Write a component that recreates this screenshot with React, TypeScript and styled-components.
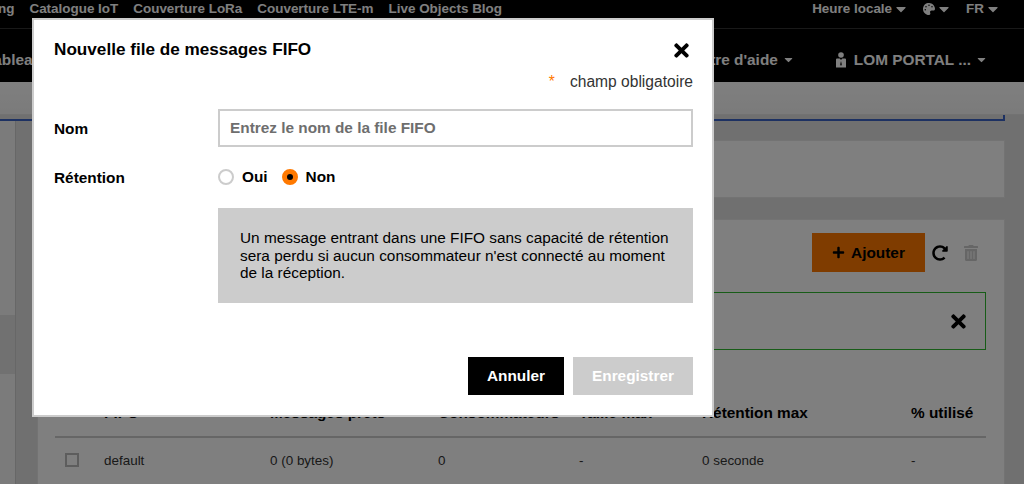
import React from 'react'
import styled, { createGlobalStyle } from 'styled-components'
import { FaCaretDown, FaPalette, FaPlus, FaRedoAlt, FaTimes, FaTrashAlt } from 'react-icons/fa'

const GlobalStyle = createGlobalStyle`
  html, body {
    margin: 0;
    height: 100%;
    overflow: hidden;
    background: #e0e0e0;
    font-family: "Liberation Sans", Arial, sans-serif;
    color: #000;
  }
`

const Page = styled.div`
  width: 1024px;
  height: 484px;
  overflow: hidden;
`

const TopBar = styled.div`
  height: 29px;
  box-sizing: border-box;
  background: #000;
  border-bottom: 1px solid #333;
  display: flex;
  justify-content: space-between;
  padding: 0 23px 0 0;
  font-size: 13.44px;
  font-weight: 700;
  line-height: 17px;
  color: #fff;
`

const TopLinks = styled.div`
  display: flex;
  gap: 15px;
  margin-left: -2px;
`

const TopTools = styled.div`
  display: flex;
  gap: 14px;
`

const Tool = styled.span`
  display: flex;
  align-items: center;
  gap: 1px;
  height: 17px;
`

const NavBar = styled.div`
  height: 53px;
  background: #000;
  display: flex;
  align-items: center;
  padding: 8px 36px 0 0;
  box-sizing: border-box;
  color: #fff;
  font-size: 15.36px;
  font-weight: 700;
  gap: 41px;
  overflow: hidden;
`

const NavItem = styled.span`
  display: flex;
  align-items: center;
  gap: 4px;
  white-space: nowrap;
`

const NavStart = styled(NavItem)`
  margin: 0 auto 0 -15px;
`

const UserGlyph = styled.svg`
  margin-right: 4px;
`

const SubBar = styled.div`
  height: 32px;
  background: linear-gradient(#ffffff, #f6f6f6);
  border-bottom: 1px solid #e4e4e4;
`

const Strip = styled.div`
  height: 4px;
  margin-right: 19px;
  border-bottom: 2px solid #3b62c4;
  border-right: 2px solid #3b62c4;
`

const Layout = styled.div`
  display: flex;
`

const Sidebar = styled.div`
  width: 15px;
  height: 380px;
  flex: none;
  background: #f6f6f6;
  border-right: 1px solid #cfcfcf;
  padding-top: 194px;
  box-sizing: content-box;
`

const SideActive = styled.div`
  height: 59px;
  background: #e2e2e2;
`

const Main = styled.div`
  flex: 1;
  padding: 19px 19px 0 21px;
  display: flex;
  flex-direction: column;
  gap: 21px;
`

const Panel = styled.div<{ $height?: number }>`
  background: #fff;
  border: 1px solid #e6e6e6;
  height: ${p => (p.$height ? `${p.$height}px` : 'auto')};
  box-sizing: border-box;
`

const ListPanel = styled(Panel)`
  padding: 13px 18px 0 17px;
  height: 300px;
`

const Actions = styled.div`
  display: flex;
  justify-content: flex-end;
  align-items: center;
  padding-right: 5px;
`

const AddButton = styled.div`
  width: 113px;
  height: 39px;
  background: #ff7900;
  display: flex;
  align-items: center;
  justify-content: center;
  gap: 6px;
  font-size: 15.36px;
  font-weight: 700;
  margin-right: 5px;
`

const IconSlot = styled.span<{ $muted?: boolean }>`
  width: 20px;
  display: flex;
  justify-content: center;
  color: ${p => (p.$muted ? '#ccc' : '#000')};

  & + & {
    margin-left: 11px;
  }
`

const SuccessBox = styled.div`
  margin-top: 20px;
  height: 58px;
  box-sizing: border-box;
  border: 1px solid #2eb82e;
  display: flex;
  align-items: center;
  justify-content: flex-end;
  padding-right: 16px;
`

const Row = styled.div<{ $head?: boolean }>`
  display: grid;
  grid-template-columns: 49px 166px 168px 141px 123px 209px 1fr;
  align-items: center;
  height: ${p => (p.$head ? '46px' : '44px')};
  padding-bottom: ${p => (p.$head ? '2px' : '0')};
  box-sizing: border-box;
  font-size: ${p => (p.$head ? '15.36px' : '13.44px')};
  font-weight: ${p => (p.$head ? 700 : 400)};
  border-bottom: ${p => (p.$head ? '2px solid #ccc' : 'none')};
  color: ${p => (p.$head ? '#000' : '#333')};
  margin-top: ${p => (p.$head ? '42px' : '0')};
`

const Check = styled.span`
  width: 14px;
  height: 14px;
  margin-left: 10px;
  box-sizing: border-box;
  border: 2px solid #bbb;
  display: block;
`

const Overlay = styled.div`
  position: fixed;
  inset: 0;
  background: rgba(0, 0, 0, 0.5);
`

const Modal = styled.div`
  position: fixed;
  left: 32px;
  top: 18px;
  width: 682px;
  height: 399px;
  box-sizing: border-box;
  background: #fff;
  border: 2px solid #ccc;
  padding: 0 19px 0 20px;
  display: flex;
  flex-direction: column;
`

const ModalHead = styled.div`
  display: flex;
  justify-content: space-between;
  align-items: center;
  height: 27px;
  margin-top: 16px;
`

const Title = styled.h2`
  margin: 0;
  font-size: 17.15px;
  line-height: 27px;
  font-weight: 700;
`

const CloseIcon = styled.span`
  display: flex;
  margin: 2px 1px 0 0;
`

const Required = styled.div`
  margin-top: 10px;
  height: 18px;
  display: flex;
  justify-content: flex-end;
  gap: 15px;
  font-size: 15.6px;
  line-height: 18px;
  color: #333;
`

const Star = styled.span`
  color: #ff7900;
`

const Field = styled.div`
  display: grid;
  grid-template-columns: 164px 1fr;
  align-items: center;
`

const Label = styled.label`
  margin-top: 2px;
  font-size: 15.36px;
  font-weight: 700;
`

const NameField = styled(Field)`
  margin-top: 18px;
`

const RetentionField = styled(Field)`
  margin-top: 18px;
  height: 24px;
`

const TextInput = styled.input`
  height: 38px;
  box-sizing: border-box;
  border: 2px solid #ccc;
  padding: 0 10px;
  font: 700 15.36px "Liberation Sans", Arial, sans-serif;
  outline: none;

  &::placeholder {
    color: #6e6e6e;
    opacity: 1;
  }
`

const Radios = styled.div`
  display: flex;
  align-items: center;
  gap: 14px;
`

const RadioOption = styled.span`
  display: flex;
  align-items: center;
  gap: 8px;
  font-size: 15.36px;
  font-weight: 700;
`

const RadioDot = styled.span<{ $on?: boolean }>`
  width: 16px;
  height: 16px;
  border-radius: 50%;
  box-sizing: border-box;
  border: ${p => (p.$on ? '5px solid #ff7900' : '2px solid #ccc')};
  background: ${p => (p.$on ? '#000' : '#fff')};
`

const Notice = styled.div`
  margin: 19px 0 0 164px;
  height: 95px;
  box-sizing: border-box;
  background: #ccc;
  padding: 21px 22px 0;
  font-size: 15.36px;
  line-height: 17.5px;
  color: #000;
`

const Footer = styled.div`
  margin-top: 54px;
  display: flex;
  justify-content: flex-end;
  gap: 9px;
`

const Button = styled.div<{ $disabled?: boolean }>`
  width: ${p => (p.$disabled ? '120px' : '96px')};
  height: 38px;
  display: flex;
  align-items: center;
  justify-content: center;
  font-size: 15.36px;
  font-weight: 700;
  color: #fff;
  background: ${p => (p.$disabled ? '#ccc' : '#000')};
`

const topLinks = ['ng', 'Catalogue IoT', 'Couverture LoRa', 'Couverture LTE-m', 'Live Objects Blog']

// the portal's own user glyph: narrow bust with a tie, not in the icon packs
const UserIcon = () => (
  <UserGlyph width="10" height="16" viewBox="0 0 10 16" fill="currentColor">
    <circle cx="5" cy="3" r="2.8" />
    <path d="M0 7.5 Q0 6.5 1 6.5 H3.8 L5 8 L6.2 6.5 H9 Q10 6.5 10 7.5 V15.5 H0 Z M5 9 L4.2 12.5 L5 14 L5.8 12.5 Z" fillRule="evenodd" />
  </UserGlyph>
)

export default function App() {
  return (
    <Page>
      <GlobalStyle />
      <TopBar>
        <TopLinks>
          {topLinks.map(link => <span key={link}>{link}</span>)}
        </TopLinks>
        <TopTools>
          <Tool>Heure locale <FaCaretDown size={16} /></Tool>
          <Tool><FaPalette size={12} /> <FaCaretDown size={16} /></Tool>
          <Tool>FR <FaCaretDown size={16} /></Tool>
        </TopTools>
      </TopBar>
      <NavBar>
        <NavStart>Tableau de bord</NavStart>
        <NavItem>Centre d'aide <FaCaretDown size={13} /></NavItem>
        <NavItem><UserIcon /> LOM PORTAL ... <FaCaretDown size={13} /></NavItem>
      </NavBar>
      <SubBar />
      <Strip />
      <Layout>
        <Sidebar><SideActive /></Sidebar>
        <Main>
          <Panel $height={58} />
          <ListPanel>
            <Actions>
              <AddButton><FaPlus size={13} /> Ajouter</AddButton>
              <IconSlot><FaRedoAlt size={16} /></IconSlot>
              <IconSlot $muted><FaTrashAlt size={16} /></IconSlot>
            </Actions>
            <SuccessBox><FaTimes size={21} /></SuccessBox>
            <Row $head>
              <span />
              <span>FIFO</span>
              <span>Messages prêts</span>
              <span>Consommateurs</span>
              <span>Taille max</span>
              <span>Rétention max</span>
              <span>% utilisé</span>
            </Row>
            <Row>
              <Check />
              <span>default</span>
              <span>0 (0 bytes)</span>
              <span>0</span>
              <span>-</span>
              <span>0 seconde</span>
              <span>-</span>
            </Row>
          </ListPanel>
        </Main>
      </Layout>
      <Overlay />
      <Modal>
        <ModalHead>
          <Title>Nouvelle file de messages FIFO</Title>
          <CloseIcon><FaTimes size={21} /></CloseIcon>
        </ModalHead>
        <Required><Star>*</Star> champ obligatoire</Required>
        <NameField>
          <Label>Nom</Label>
          <TextInput placeholder="Entrez le nom de la file FIFO" />
        </NameField>
        <RetentionField>
          <Label>Rétention</Label>
          <Radios>
            <RadioOption><RadioDot /> Oui</RadioOption>
            <RadioOption><RadioDot $on /> Non</RadioOption>
          </Radios>
        </RetentionField>
        <Notice>
          Un message entrant dans une FIFO sans capacité de rétention sera perdu si aucun consommateur n'est connecté au moment de la réception.
        </Notice>
        <Footer>
          <Button>Annuler</Button>
          <Button $disabled>Enregistrer</Button>
        </Footer>
      </Modal>
    </Page>
  )
}
